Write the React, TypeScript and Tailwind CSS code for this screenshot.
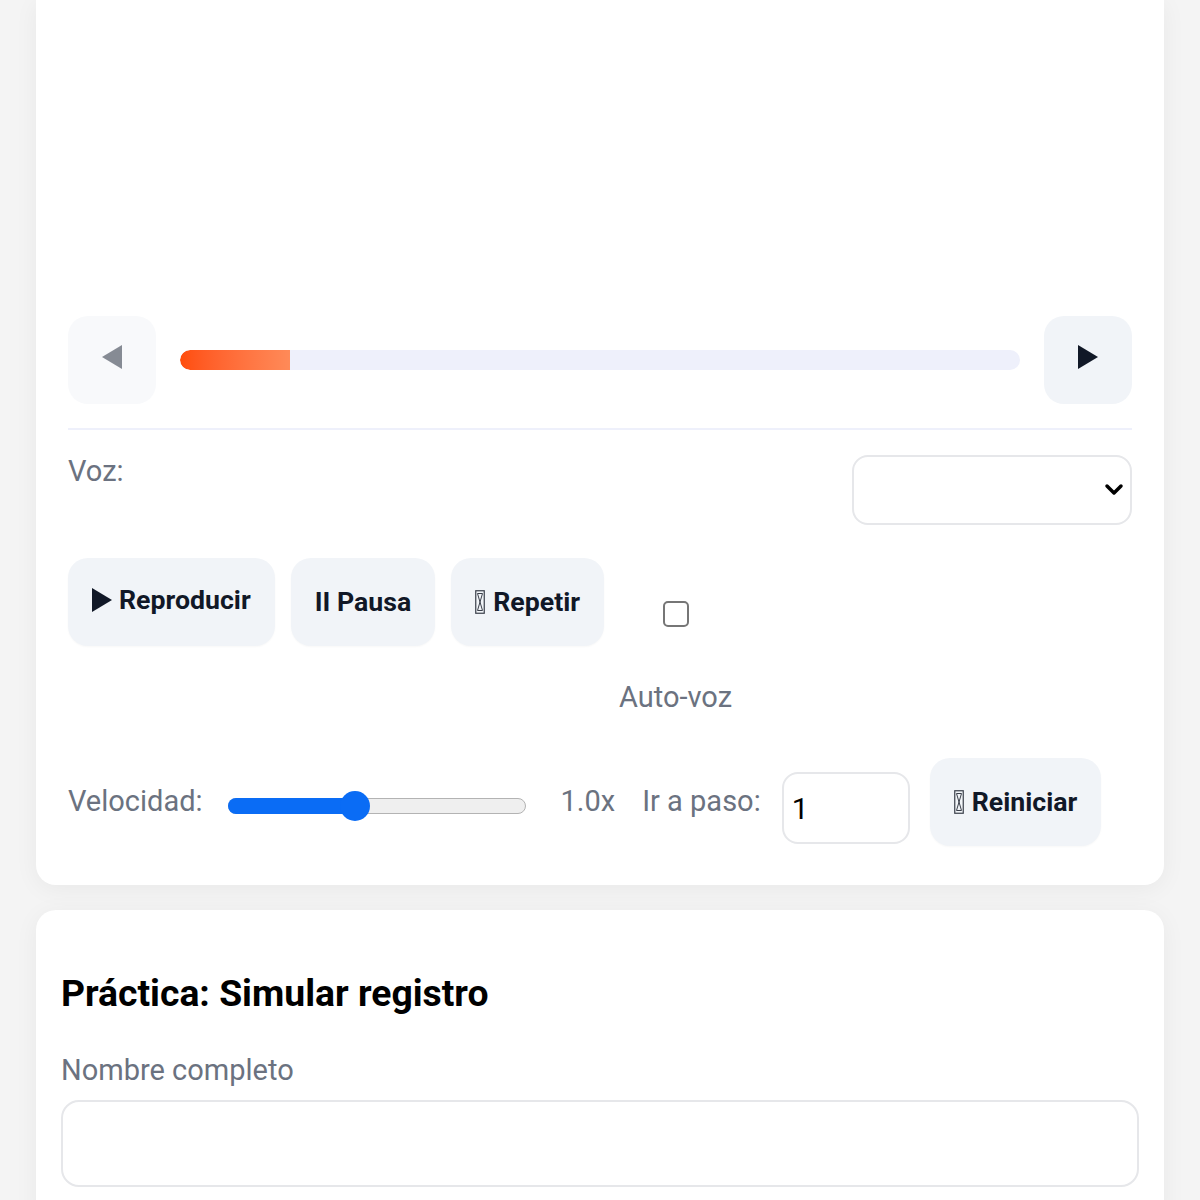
import React from "react";

const font = { fontFamily: "Roboto, 'Noto Sans', sans-serif" };

function Tofu() {
  return (
    <svg width="10" height="24" viewBox="0 0 10 24" className="inline-block mr-[8px] align-[-3px]">
      <rect x="0.75" y="0.75" width="8.5" height="22.5" fill="none" stroke="#3a3f4a" strokeWidth="1.2" />
      <path d="M2.5 3.5 L7.5 20.5 M7.5 3.5 L2.5 20.5 M2.5 3.5 H7.5 M2.5 20.5 H7.5" fill="none" stroke="#3a3f4a" strokeWidth="1" />
    </svg>
  );
}

function Tri({ dir, color, w = 20, h = 24 }: { dir: "l" | "r"; color: string; w?: number; h?: number }) {
  const pts = dir === "r" ? `0,0 ${w},${h / 2} 0,${h}` : `${w},0 0,${h / 2} ${w},${h}`;
  return (
    <svg width={w} height={h} viewBox={`0 0 ${w} ${h}`} className="block">
      <polygon points={pts} fill={color} />
    </svg>
  );
}

function SideBtn({ children, light }: { children: React.ReactNode; light?: boolean }) {
  return (
    <div
      className={`w-[88px] h-[88px] shrink-0 rounded-[20px] flex items-center justify-center pb-[7px] ${
        light ? "bg-[#f8f9fb]" : "bg-[#f1f4f8]"
      }`}
    >
      {children}
    </div>
  );
}

function Btn({ children, up }: { children: React.ReactNode; up?: boolean }) {
  return (
    <button
      className={`h-[88px] px-[24px] rounded-[20px] bg-[#f1f4f8] text-[#111827] font-bold text-[26.7px] leading-none whitespace-nowrap flex items-center shadow-[0_1px_2px_rgba(0,0,0,0.03)] ${
        up ? "pb-[4px]" : ""
      }`}
    >
      {children}
    </button>
  );
}

export default function App() {
  return (
    <div className="w-[1200px] h-[1200px] overflow-hidden bg-[#f4f4f4]" style={font}>
      <div className="mx-[36px] bg-white rounded-b-[20px] px-[32px] pb-[39px] shadow-[0_4px_24px_rgba(0,0,0,0.05)]">
        <div className="h-[316px]" />
        <div className="flex items-center gap-[24px]">
          <SideBtn light>
            <Tri dir="l" color="#868b94" />
          </SideBtn>
          <div className="flex-1 h-[20px] rounded-full bg-[#eef0fb] overflow-hidden">
            <div className="h-full w-[110px] rounded-l-full bg-gradient-to-r from-[#ff4d0a] to-[#ff8a58]" />
          </div>
          <SideBtn>
            <Tri dir="r" color="#111827" />
          </SideBtn>
        </div>
        <div className="mt-[24px] h-[2px] bg-[#eef0fb]" />
        <div className="mt-[25px] flex items-start justify-between">
          <div className="text-[#6b7280] text-[29px] leading-[30px] mt-[1px]">Voz:</div>
          <div className="w-[280px] h-[70px] rounded-[16px] border-2 border-[#e6e7ea] flex items-center justify-end pr-[6px]">
            <svg width="20" height="14" viewBox="0 0 20 14">
              <path d="M3 3 L10 10 L17 3" fill="none" stroke="#000" strokeWidth="3.5" strokeLinecap="round" strokeLinejoin="round" />
            </svg>
          </div>
        </div>
        <div className="mt-[33px] flex items-start gap-[16px]">
          <Btn up>
            <span className="mr-[7px]">
              <Tri dir="r" color="#111827" w={20} h={24} />
            </span>
            Reproducir
          </Btn>
          <Btn>II Pausa</Btn>
          <Btn>
            <Tofu />
            Repetir
          </Btn>
          <label className="flex flex-col items-center w-[111px] mt-[43px]">
            <span className="w-[26px] h-[26px] rounded-[5px] border-2 border-[#767676] bg-white" />
            <span className="mt-[55px] text-[#6b7280] text-[29px] leading-[30px] whitespace-nowrap">Auto-voz</span>
          </label>
        </div>
        <div className="mt-[46px] flex items-center">
          <span className="text-[#6b7280] text-[29px] leading-[30px] mt-[-2px]">Velocidad:</span>
          <div className="relative ml-[25px] w-[298px] h-[16px] mt-[8px] rounded-full bg-[#efefef] border border-[#b3b3b3]">
            <div className="absolute left-[-1px] top-[-1px] h-[16px] w-[130px] rounded-full bg-[#0a6cf5]" />
            <div className="absolute left-[111px] top-[-8px] w-[30px] h-[30px] rounded-full bg-[#0a6cf5]" />
          </div>
          <span className="ml-[35px] text-[#6b7280] text-[29px] leading-[30px] mt-[-2px]">1.0x</span>
          <span className="ml-[27px] text-[#6b7280] text-[29px] leading-[30px] mt-[-2px]">Ir a paso:</span>
          <div className="ml-[21px] mt-[12px] w-[128px] h-[72px] shrink-0 rounded-[16px] border-2 border-[#e6e7ea] flex items-center pl-[8px] text-[30px] text-black">
            1
          </div>
          <div className="ml-[20px]">
            <Btn>
              <Tofu />
              Reiniciar
            </Btn>
          </div>
        </div>
      </div>
      <div className="mx-[36px] mt-[25px] bg-white rounded-[20px] px-[25px] pt-[61px] pb-[40px] shadow-[0_4px_24px_rgba(0,0,0,0.05)]">
        <h2 className="text-[37.3px] font-bold leading-[44px] text-black">Práctica: Simular registro</h2>
        <div className="mt-[35px] text-[#6b7280] text-[29px] leading-[40px]">Nombre completo</div>
        <div className="mt-[10px] h-[87px] rounded-[18px] border-2 border-[#e6e7ea]" />
      </div>
    </div>
  );
}
